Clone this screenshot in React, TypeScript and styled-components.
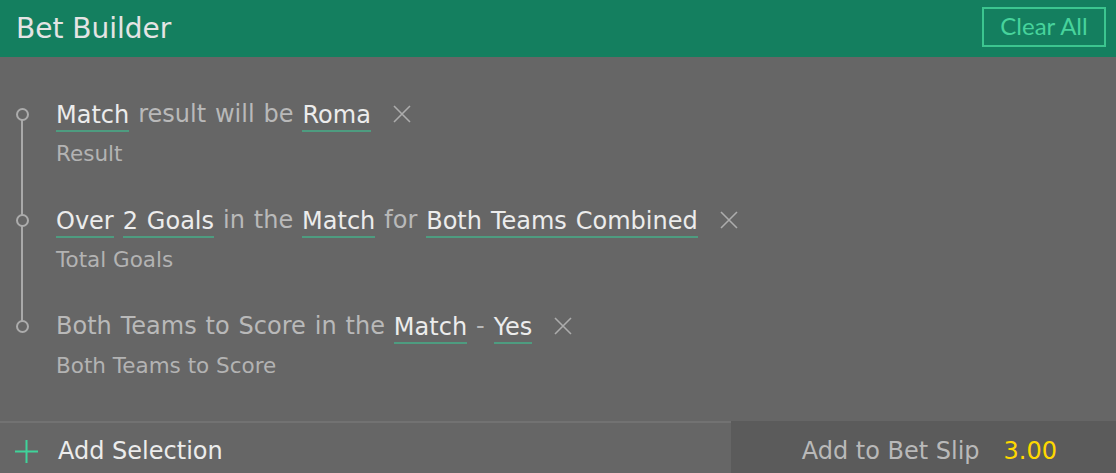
import React from "react";
import styled, { createGlobalStyle } from "styled-components";

const Global = createGlobalStyle`
  html, body { margin: 0; padding: 0; background: #666666; }
  body { font-family: "DejaVu Sans", "Noto Sans", sans-serif; }
`;

const Panel = styled.div`
  width: 1116px;
  height: 473px;
  display: flex;
  flex-direction: column;
  background: #666666;
  overflow: hidden;
`;

const Header = styled.header`
  height: 57px;
  background: #147f5f;
  display: flex;
  align-items: center;
  justify-content: space-between;
  padding: 0 10px 0 16px;
  box-sizing: border-box;
`;

const Title = styled.h1`
  margin: 0;
  font-weight: 400;
  font-size: 28px;
  color: #e4e4e4;
  line-height: 1;
`;

const ClearButton = styled.button`
  align-self: flex-start;
  margin-top: 7px;
  width: 124px;
  height: 40px;
  box-sizing: border-box;
  border: 2px solid #3cc58f;
  background: transparent;
  color: #47d39c;
  font-family: Lato, "Open Sans", sans-serif;
  font-size: 24px;
  line-height: 1;
  padding: 0 0 2px;
  cursor: pointer;
`;

const Body = styled.div`
  flex: 1;
  padding: 40px 0 0 0;
  position: relative;
`;

const Timeline = styled.div`
  position: absolute;
  left: 21px;
  top: 57px;
  height: 212px;
  width: 2px;
  background: #a9a9a9;
`;

const Row = styled.div`
  position: relative;
  padding-left: 56px;
  margin-bottom: 37px;
`;

const Dot = styled.span`
  position: absolute;
  left: 16px;
  top: 11px;
  width: 9px;
  height: 9px;
  border: 2px solid #acacac;
  border-radius: 50%;
  background: #666666;
  z-index: 1;
`;

const Line = styled.div`
  display: flex;
  align-items: center;
  height: 34px;
  font-size: 24px;
  word-spacing: 1.3px;
  color: #b9b9b9;
  white-space: pre;
`;

const Pick = styled.span`
  color: #ececec;
  border-bottom: 2px solid #4e9c80;
  line-height: 30px;
  padding-top: 4px;
`;

const Remove = styled.button`
  margin-left: 21px;
  width: 20px;
  height: 20px;
  padding: 0;
  border: none;
  background: transparent;
  display: flex;
  cursor: pointer;
`;

const Sub = styled.div`
  margin-top: 11px;
  height: 24px;
  line-height: 24px;
  font-size: 21.5px;
  color: #b3b3b3;
`;

const Footer = styled.footer`
  height: 52px;
  display: flex;
  border-top: 2px solid #727272;
  box-sizing: border-box;
`;

const AddSelection = styled.div`
  flex: 1;
  display: flex;
  align-items: center;
  padding: 6px 0 0 15px;
  gap: 20px;
  font-size: 24px;
  color: #ececec;
`;

const SlipButton = styled.div`
  width: 385px;
  margin-top: -2px;
  padding: 8px 59px 0 0;
  background: #5b5b5b;
  display: flex;
  align-items: center;
  justify-content: flex-end;
  box-sizing: border-box;
  font-size: 24px;
  color: #b9b9b9;
  gap: 24px;
`;

const Price = styled.span`
  color: #ffd800;
`;

const Cross = () => (
  <svg width="20" height="20" viewBox="0 0 20 20">
    <path d="M2 2 L18 18 M18 2 L2 18" stroke="#acacac" strokeWidth="1.6" fill="none" />
  </svg>
);

const Plus = () => (
  <svg width="23" height="23" viewBox="0 0 23 23">
    <path d="M11.5 0 V23 M0 11.5 H23" stroke="#3fd39a" strokeWidth="2" fill="none" />
  </svg>
);

type Part = { t: string; pick?: boolean };

const rows: { parts: Part[]; sub: string }[] = [
  {
    parts: [{ t: "Match", pick: true }, { t: " result will be " }, { t: "Roma", pick: true }],
    sub: "Result",
  },
  {
    parts: [
      { t: "Over", pick: true },
      { t: " " },
      { t: "2 Goals", pick: true },
      { t: " in the " },
      { t: "Match", pick: true },
      { t: " for " },
      { t: "Both Teams Combined", pick: true },
    ],
    sub: "Total Goals",
  },
  {
    parts: [
      { t: "Both Teams to Score in the " },
      { t: "Match", pick: true },
      { t: " - " },
      { t: "Yes", pick: true },
    ],
    sub: "Both Teams to Score",
  },
];

export default function App() {
  return (
    <>
      <Global />
      <Panel>
        <Header>
          <Title>Bet Builder</Title>
          <ClearButton>Clear All</ClearButton>
        </Header>
        <Body>
          <Timeline />
          {rows.map((r, i) => (
            <Row key={i}>
              <Dot />
              <Line>
                {r.parts.map((p, j) =>
                  p.pick ? <Pick key={j}>{p.t}</Pick> : <span key={j}>{p.t}</span>
                )}
                <Remove aria-label="remove">
                  <Cross />
                </Remove>
              </Line>
              <Sub>{r.sub}</Sub>
            </Row>
          ))}
        </Body>
        <Footer>
          <AddSelection>
            <Plus />
            <span>Add Selection</span>
          </AddSelection>
          <SlipButton>
            <span>Add to Bet Slip</span>
            <Price>3.00</Price>
          </SlipButton>
        </Footer>
      </Panel>
    </>
  );
}
